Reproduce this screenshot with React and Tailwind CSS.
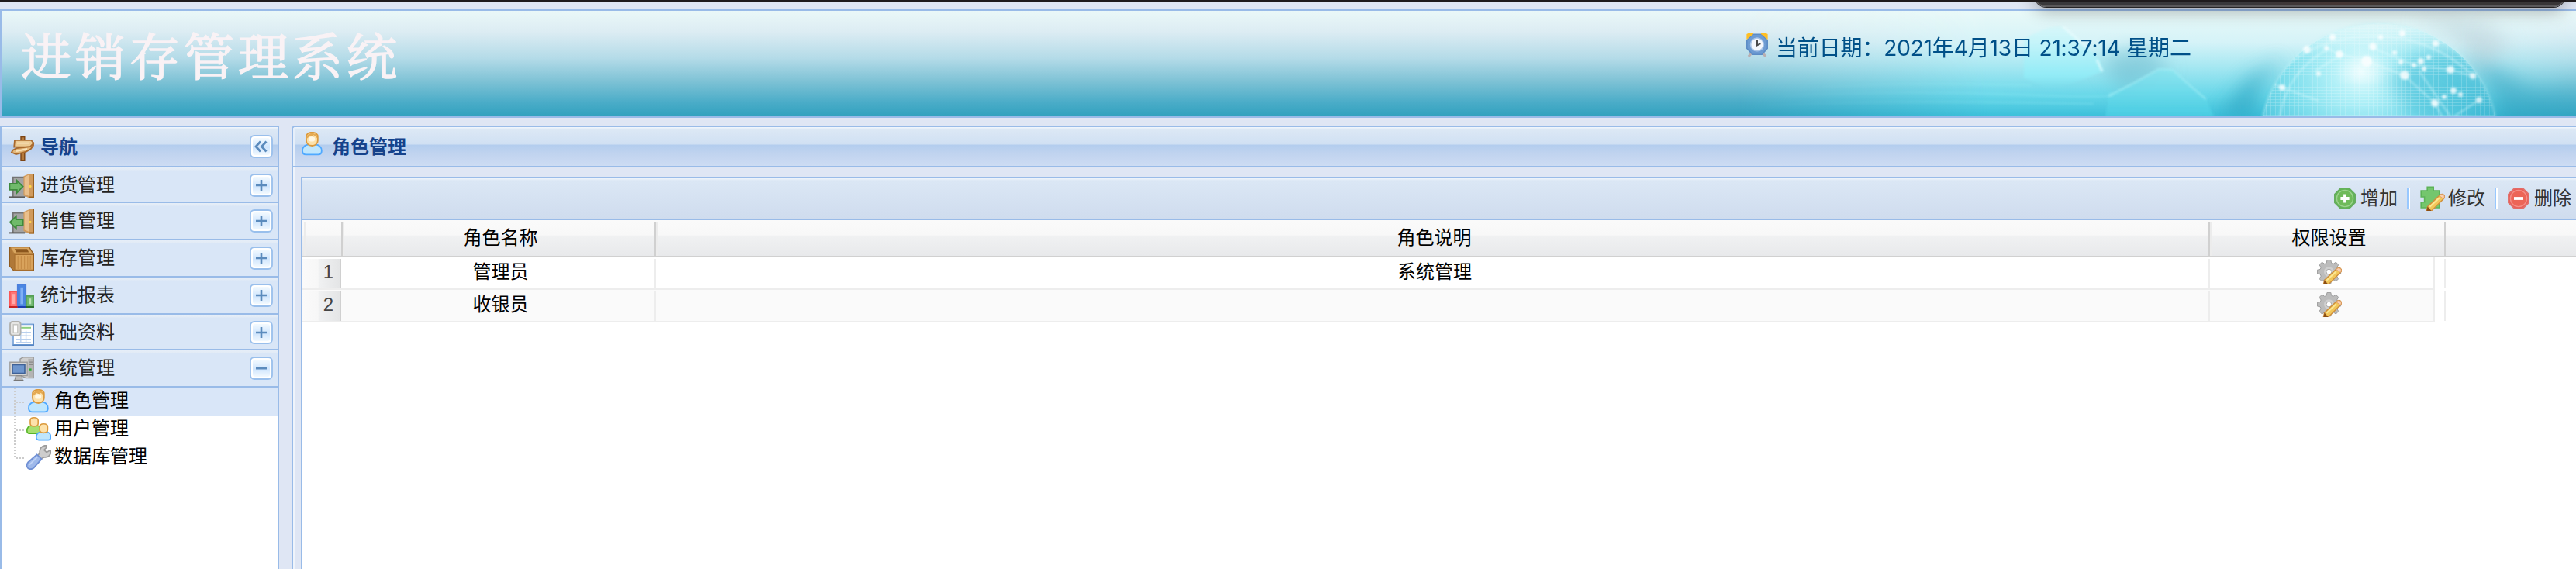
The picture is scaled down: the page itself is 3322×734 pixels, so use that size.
import React from 'react';

const px = { width: 32, height: 32, viewBox: '0 0 16 16' };

function Signpost() {
  return (
    <svg {...px} className="shrink-0">
      <rect x="7" y="0.3" width="2.4" height="15.4" fill="#b57a3c" stroke="#7c4414" strokeWidth=".7" />
      <path d="M3 2.4h10.6l1.6 2-1.6 2.4H2.6z" fill="#eccb94" stroke="#a9692c" strokeWidth=".9" />
      <path d="M13 6.6L15 4.6v1.2l-1.6 2.2-3 1.8-6.6 1.7-2.8-1.2L1.6 9l2.6-1.4z" fill="#e4b97c" stroke="#a9692c" strokeWidth=".9" />
      <path d="M4.5 4.3h8M4 9.6l7-1.6" stroke="#f8e4bd" strokeWidth=".9" />
    </svg>
  );
}

function Door({ out }) {
  return (
    <svg {...px} className="shrink-0">
      <path d="M2 2h9v13H2z" fill="#a3a3a3" />
      <path d="M2.4 15V2.3H10" fill="none" stroke="#747474" strokeWidth=".8" />
      <path d="M0 15.2h10" stroke="#5d5d5d" strokeWidth="1" />
      <path d="M9.2 1.6L13 0h3v15.8h-3.2L9.2 14z" fill="#d09a5c" />
      <path d="M9.8 2.2L12.6.8v13.6l-2.8-1.1z" fill="#e9bf8c" />
      <path d="M15.2 0H16v15.8h-3v-1h2.2z" fill="#99611f" />
      <circle cx="13.5" cy="8.2" r=".8" fill="#ffd54a" />
      {out ? (
        <path d="M.4 8.3L4.4 4.5v2h4.4v3.900H4.4v2z" fill="#6fba6a" stroke="#3e8a3d" strokeWidth=".9" />
      ) : (
        <path d="M8.8 8.3L4.900 4.500v2H.2v3.900h4.700v2z" fill="#6fba6a" stroke="#3e8a3d" strokeWidth=".9" />
      )}
    </svg>
  );
}

function Box() {
  return (
    <svg {...px} className="shrink-0">
      <path d="M.3.3h12.500L15.700 5v10.700H3L.3 12.800z" fill="#b8813f" stroke="#8f5a1e" strokeWidth=".6" />
      <path d="M1 .8h11.600l2.400 4H3.600z" fill="#d8a55f" />
      <path d="M3.400 1.600h8.200l1 2.200H4.600z" fill="#8b561d" />
      <path d="M.7 1.500l2.400 3.600v9.800L.7 12.500z" fill="#b07838" />
      <path d="M3.500 5.200h11.800v10H3.500z" fill="#d9a35c" stroke="#a56c2c" strokeWidth=".6" />
      <path d="M5.6 6v8.6M7.7 6v8.6M9.8 6v8.6M11.9 6v8.6M13.6 6v8.6" stroke="#c68c46" strokeWidth=".6" />
    </svg>
  );
}

function Chart() {
  return (
    <svg {...px} className="shrink-0">
      <path d="M.4 5h4.8v10H.4z" fill="#ff7676" stroke="#fb5656" strokeWidth=".9" />
      <path d="M5.4.6h5.2v14.4H5.400z" fill="#4a86e2" stroke="#4a7fdd" strokeWidth=".9" />
      <path d="M10.9 7.9h4.7V15h-4.7z" fill="#6fb76f" stroke="#55a055" strokeWidth=".9" />
      <path d="M2 6.600h1.600v6.500H2z" fill="#ffa9a9" />
      <path d="M7.200 2.400H9v10.800H7.200z" fill="#7fb0f4" />
      <path d="M12.5 9.600h1.600v3.600h-1.600z" fill="#b8e0b2" />
      <path d="M0 15h5.400" stroke="#c92222" /><path d="M5.400 15h5.400" stroke="#1c3fb4" /><path d="M10.800 15H16" stroke="#2c702c" />
    </svg>
  );
}

function Sheet() {
  return (
    <svg {...px} className="shrink-0">
      <path d="M2.5 2.2h13v13.2h-13z" fill="#fff" stroke="#7fa8da" strokeWidth=".9" />
      <path d="M15.6 2v13.6H2.2" fill="none" stroke="#5584c2" strokeWidth=".7" />
      <path d="M7.5 4.4H14" stroke="#8bcf7d" strokeWidth="1" />
      <path d="M4 7.3h10M4 9.6h10M4 11.8h10M4 13.8h10M7.4 6.4v8M10.8 6.4v8" stroke="#b9d0ee" strokeWidth=".7" />
      <rect x=".5" y=".5" width="6.8" height="8.8" rx="1.6" fill="#e6e6e4" stroke="#b0b0ad" strokeWidth=".9" />
      <rect x="2.6" y="2.4" width="2.8" height="5.2" fill="#fff" stroke="#c4c4bf" strokeWidth=".7" />
    </svg>
  );
}

function Computer() {
  return (
    <svg {...px} className="shrink-0">
      <path d="M7 1.6L9 .4h6.6v13.4h-5L7 12z" fill="#cfcfcf" stroke="#9a9a9a" strokeWidth=".7" />
      <path d="M12.2 1.4h3v12h-3z" fill="#b3b3b3" /><path d="M12.6 3.6h2.4M12.6 5.2h2.4" stroke="#8a8a8a" strokeWidth=".6" />
      <path d="M12.7 8.3h1.6" stroke="#2fae3a" strokeWidth="1.2" />
      <path d="M.4 3.6h11.2v8.7H.4z" fill="#d6d6d6" stroke="#9f9f9f" strokeWidth=".7" />
      <path d="M2 5.2h8v5.6H2z" fill="#6d95cd" stroke="#3f6196" strokeWidth=".8" />
      <path d="M4.2 12.4h3.8l.6 3H3.4z" fill="#bdbdbd" stroke="#848484" strokeWidth=".5" />
      <path d="M2.8 15.4h6.4" stroke="#777" strokeWidth=".9" />
    </svg>
  );
}

function Role() {
  return (
    <svg {...px} className="shrink-0">
      <path d="M1.5 12.2c0-2.6 2.2-3.9 3.7-3.9h5c1.7 0 3.7 1.5 3.7 3.9 0 1.8-.9 2.5-2.3 2.5H3.8c-1.3 0-2.3-.8-2.3-2.5z" fill="#bfe6fd" stroke="#4fa9ff" strokeWidth=".9" />
      <path d="M4 3.2C4 1.4 5.4.4 7.7.4s3.7 1 3.7 2.8v2.6c0 1.7-1.6 3.2-3.7 3.2S4 7.500 4 5.800z" fill="#fde2ab" stroke="#db9a3d" strokeWidth=".9" />
      <path d="M4.2 4.600c0-2.600 1.200-3.600 3.500-3.600s3.500 1 3.500 3.400L9.900 2.900 8.400 2l.4 1.500-2.200-1z" fill="#e5aa52" />
      <ellipse cx="7.600" cy="4.700" rx="2" ry="1.600" fill="#fff7e3" />
    </svg>
  );
}

function Users() {
  return (
    <svg {...px} className="shrink-0">
      <path d="M.4 8.800C.4 6.800 1.800 5.600 3 5.600h4.200c1.500 0 2.500 1.300 2.500 3.200 0 1.100-.6 1.800-1.600 1.800H2C1 10.600.4 9.900.4 8.800z" fill="#a6e070" stroke="#58b528" strokeWidth=".8" />
      <path d="M2.500 2.200C2.500 1 3.500.4 5 .4s2.600.7 2.600 1.900v1.800C7.600 5.300 6.500 6 5 6S2.500 5.300 2.500 4.100z" fill="#fde2ab" stroke="#db9a3d" strokeWidth=".8" />
      <path d="M6.400 13c0-2 1.400-3.200 2.600-3.200h4.200c1.500 0 2.500 1.300 2.500 3.100 0 1.200-.6 1.900-1.600 1.900H8c-1 0-1.600-.7-1.600-1.800z" fill="#bfe6fd" stroke="#4fa9ff" strokeWidth=".8" />
      <path d="M8.600 6.300c0-1.200 1-1.900 2.500-1.900s2.600.7 2.600 1.900v2c0 1.200-1.100 1.900-2.600 1.900s-2.500-.7-2.500-1.900z" fill="#fde2ab" stroke="#db9a3d" strokeWidth=".8" />
    </svg>
  );
}

function Wrench() {
  return (
    <svg {...px} className="shrink-0">
      <path d="M7.400 7.200l1.200-2.400C8.300 2.400 10 .4 12.600.3l.5 1.200-1.700 1.700 1.600 1.500 2.200-1.200.6.500c.1 2.500-1.900 4.300-4.200 3.900L9.300 9z" fill="#cdcdcd" stroke="#9b9b9b" strokeWidth=".8" />
      <path d="M6.800 6.200l3 2.900-5 5.700c-1.700 1.400-3.800.8-4.400-.8-.3-1 0-2 .8-2.900z" fill="#9fb9ea" stroke="#6f8fd4" strokeWidth=".9" />
      <path d="M7 7.800L2 12.800" stroke="#bfd2f6" strokeWidth="1" />
    </svg>
  );
}

function Pencil() {
  return (
    <g>
      <path d="M4.200 16l.6-2.800 7.700-7.200c.9-.8 2-1 2.800-.2.700.8.600 1.600-.2 2.500L7.700 15.600 7 16z" fill="#f2c75a" stroke="#cf8f3c" strokeWidth=".7" />
      <path d="M6.200 13.400l6.200-5.800" stroke="#fbe794" strokeWidth="1" />
      <path d="M12.300 6.200c.9-.9 2.100-1.200 2.900-.4.700.8.600 1.600-.1 2.500z" fill="#fbcfae" stroke="#dc9a63" strokeWidth=".4" />
      <path d="M4.200 16l.6-2.800 2.300 2.500L7 16z" fill="#8b4e14" />
    </g>
  );
}

function GearEdit() {
  return (
    <svg {...px} className="shrink-0">
      <path d="M6.500.2h2.400l.4 2 1.200.5 1.700-1.100 1.700 1.700-1.100 1.700.5 1.200 2 .4V9l-2 .4-.5 1.200 1.100 1.700-1.700 1.700-1.700-1.100-1.200.5-.4 2H6.500l-.4-2-1.200-.5-1.700 1.100-1.700-1.700 1.100-1.700L2.100 9.400.2 9V6.600l1.900-.4L2.600 5 1.500 3.300l1.700-1.700 1.700 1.100 1.200-.5z" fill="#bcbcbc" stroke="#9c9c9c" strokeWidth=".5" />
      <circle cx="7.700" cy="7.800" r="3.200" fill="#cfcfcf" />
      <circle cx="7.700" cy="7.800" r="1.700" fill="#fff" stroke="#ababab" strokeWidth=".5" />
      <Pencil />
    </svg>
  );
}

function PuzzleEdit() {
  return (
    <svg {...px} className="shrink-0">
      <path d="M.6 3h4V.6h4V3h3.800v11H.6v-3.600h2.200V7H.6z" fill="#74c66d" stroke="#5cb358" strokeWidth=".8" />
      <Pencil />
    </svg>
  );
}

function Round({ minus }) {
  return (
    <svg width="28" height="28" viewBox="0 0 14 14" className="shrink-0">
      <path d="M4.300.400h5.400l3.900 3.900v5.400l-3.900 3.900H4.300L.400 9.700V4.300z" fill={minus ? '#e9605a' : '#62b455'} stroke={minus ? '#e0736e' : '#66ad60'} strokeWidth=".8" strokeLinejoin="round" />
      <circle cx="7" cy="7" r="5.300" fill={minus ? '#ec6557' : '#6fba5a'} stroke={minus ? '#f48f87' : '#9bd28d'} strokeWidth=".7" />
      <path d={minus ? 'M4 7h6' : 'M4.200 7h5.600M7 4.200v5.600'} stroke="#fff" strokeWidth="1.900" />
    </svg>
  );
}

function Clock() {
  return (
    <svg width="28" height="32" viewBox="0 0 14 16" className="shrink-0">
      <path d="M1.500 15.500l2-2.500M12.500 15.500l-2-2.500" stroke="#b9aeb0" strokeWidth="1.600" />
      <path d="M4.200 1.100h5.600L13.600 5v5.200l-3.500 3.900H4L.4 10.200V5z" fill="#6d9bd2" stroke="#5c8cc6" strokeWidth=".8" />
      <circle cx="7" cy="7.700" r="4.200" fill="#f4f7fc" stroke="#a9c5e8" strokeWidth=".8" />
      <path d="M7 4.900v3.300l2.200-1.100" stroke="#4a4a4a" strokeWidth="1" fill="none" />
      <path d="M.2 4.500V1L2.200 0h2.300v1z" fill="#ffbe22" /><path d="M13.800 4.500V1l-2-1H9.500v1z" fill="#ffbe22" />
    </svg>
  );
}

function ToolButton({ kind }) {
  return (
    <svg width="30" height="30" viewBox="0 0 30 30" className="shrink-0">
      <defs>
        <linearGradient id={'tb' + kind} x1="0" y1="0" x2="0" y2="1">
          <stop offset="0" stopColor="#f3faff" /><stop offset=".55" stopColor="#cfe5fd" /><stop offset="1" stopColor="#f2f9ff" />
        </linearGradient>
      </defs>
      <rect x="1" y="1" width="28" height="28" rx="5" fill="#fff" stroke="#99bfec" strokeWidth="1.800" />
      <rect x="4" y="4" width="22" height="22" rx="3" fill={'url(#tb' + kind + ')'} />
      {kind === 'plus' && <path d="M8 15h14M15 8v14" stroke="#5b8bbd" strokeWidth="2.600" />}
      {kind === 'minus' && <path d="M8 15h14" stroke="#5b8bbd" strokeWidth="3" />}
      {kind === 'left' && <path d="M14 8.500L8 15l6 6.500M21.500 8.500l-6 6.500 6 6.500" stroke="#5b8bbd" strokeWidth="2.800" fill="none" />}
    </svg>
  );
}

const sections = [
  { label: '进货管理', icon: <Door />, row: 'h-[46px] pt-2' },
  { label: '销售管理', icon: <Door out />, row: 'h-[48px] pt-2' },
  { label: '库存管理', icon: <Box />, row: 'h-[48px] pt-2' },
  { label: '统计报表', icon: <Chart />, row: 'h-[48px] pt-2' },
  { label: '基础资料', icon: <Sheet />, row: 'h-[46px] pt-2' },
  { label: '系统管理', icon: <Computer />, row: 'h-[48px] pt-2', open: true },
];

const tree = [
  { label: '角色管理', icon: <Role />, active: true },
  { label: '用户管理', icon: <Users /> },
  { label: '数据库管理', icon: <Wrench />, last: true },
];

const dots = [[2943, 113, 4], [3000, 62, 3], [3017, 70, 5], [3060, 60, 5], [3088, 68, 3], [3096, 80, 3], [3113, 84, 3], [3126, 89, 3], [3122, 79, 4], [3132, 74, 3], [3160, 90, 5], [3189, 98, 4], [3164, 117, 4], [3173, 122, 3], [3197, 129, 4], [3140, 133, 5], [3152, 125, 3], [3101, 97, 6], [3070, 48, 3], [3141, 56, 4], [2975, 64, 5], [2990, 95, 3], [3008, 48, 4], [3098, 43, 4]];

function HeaderArt() {
  return (
    <svg className="absolute inset-0" width="3320" height="136" viewBox="2 14 3320 136">
      <defs>
        <linearGradient id="cy" x1="0" y1="0" x2="0" y2="1">
          <stop offset="0" stopColor="#e9f9f8" /><stop offset=".3" stopColor="#d5f3f8" /><stop offset=".52" stopColor="#a8e8f2" /><stop offset=".8" stopColor="#68d7e9" /><stop offset="1" stopColor="#3cc0da" />
        </linearGradient>
        <linearGradient id="fade" x1="0" y1="0" x2="1" y2="0">
          <stop offset="0" stopColor="#fff" stopOpacity="0" /><stop offset=".3" stopColor="#fff" /><stop offset=".86" stopColor="#fff" /><stop offset="1" stopColor="#fff" stopOpacity=".3" />
        </linearGradient>
        <mask id="m"><rect x="2240" y="14" width="1082" height="136" fill="url(#fade)" /></mask>
        <radialGradient id="globe" gradientUnits="userSpaceOnUse" cx="3045" cy="92" r="165">
          <stop offset="0" stopColor="#e6fcfd" /><stop offset=".2" stopColor="#b5f1f8" /><stop offset=".55" stopColor="#80dfed" stopOpacity=".9" /><stop offset="1" stopColor="#4cc3db" stopOpacity=".6" />
        </radialGradient>
        <linearGradient id="topw" x1="0" y1="0" x2="0" y2="1"><stop offset=".1" stopColor="#effcfc" stopOpacity=".9" /><stop offset=".45" stopColor="#effcfc" stopOpacity="0" /></linearGradient>
        <linearGradient id="leaf" x1="0" y1="0" x2="0" y2="1"><stop offset="0" stopColor="#d2f8fb" stopOpacity=".6" /><stop offset=".8" stopColor="#90edf8" stopOpacity=".8" /><stop offset="1" stopColor="#7be3f0" stopOpacity="0" /></linearGradient>
        <linearGradient id="leaf2" x1="0" y1="0" x2="0" y2="1"><stop offset="0" stopColor="#8be5f0" /><stop offset="1" stopColor="#4bcfe4" /></linearGradient>
        <pattern id="grid" width="6" height="4" patternUnits="userSpaceOnUse"><path d="M0 0h6M0 0v4" stroke="#fff" strokeWidth=".9" opacity=".4" /></pattern>
        <clipPath id="gc"><circle cx="3068" cy="184" r="154" /></clipPath>
        <filter id="b1"><feGaussianBlur stdDeviation="1.500" /></filter>
        <filter id="b8" x="-30%" y="-30%" width="160%" height="160%"><feGaussianBlur stdDeviation="12" /></filter>
      </defs>
      <g mask="url(#m)">
        <rect x="2240" y="14" width="1082" height="136" fill="url(#cy)" />
        <path d="M2712 86L2740 120 2780 100 2800 90 2770 60 2720 70z" fill="#6db9cc" opacity=".55" filter="url(#b8)" />
        <path d="M2905 155L2915 110 2945 75 2900 100 2860 150z" fill="#2c9fbd" opacity=".6" filter="url(#b8)" />
        <path d="M3230 165L3210 110 3180 70 3210 80 3270 115 3340 105V165z" fill="#2b9dbc" opacity=".55" filter="url(#b8)" />
        <path d="M3110 24L3170 50 3200 90 3240 60 3210 30z" fill="#b9ccd4" opacity=".6" filter="url(#b8)" />
        <path d="M2610 50C2640 34 2652 33 2660 34L2692 62 2708 78 2712 92 2670 108 2640 114 2610 100z" fill="url(#leaf)" filter="url(#b1)" />
        <path d="M2660 34L2690 60M2704 77L2711 92" stroke="#ecfdfe" strokeWidth="2.500" opacity=".8" filter="url(#b1)" fill="none" />
        <path d="M2715 150L2719 124 2750 108 2784 89 2802 90 2826 112 2845 128 2855 150z" fill="url(#leaf2)" opacity=".8" filter="url(#b1)" />
        <path d="M2719 124L2750 108 2784 89 2802 90 2826 112 2845 128" stroke="#a9f0f7" strokeWidth="2" fill="none" opacity=".7" filter="url(#b1)" />
        <path d="M2300 124Q2450 116 2600 122T2720 120M2280 136Q2450 128 2700 134M2350 112Q2460 106 2620 110" stroke="#9bf1fa" strokeWidth="3" opacity=".22" fill="none" filter="url(#b1)" />
        <g clipPath="url(#gc)">
          <circle cx="3068" cy="184" r="154" fill="url(#globe)" />
          <path d="M3110 150L3080 110 3100 80 3150 70 3200 100 3220 150z" fill="#3fb9d4" opacity=".5" filter="url(#b8)" />
          <rect x="2900" y="14" width="330" height="136" fill="url(#grid)" />
          <rect x="2900" y="14" width="330" height="136" fill="url(#topw)" />
          <path d="M2925 110Q2970 52 3050 47T3190 98M2940 150Q2950 90 3005 62M2985 92L3020 70 3052 79 3100 97 3140 133 3150 152M3000 62L3017 70M3060 62L3113 84 3160 90 3189 98M3120 92L3160 150M3197 129L3165 150M2925 105L2943 113 2990 130" stroke="#e9fdfe" strokeWidth="1.600" fill="none" opacity=".55" filter="url(#b1)" />
        </g>
        <circle cx="3068" cy="184" r="154" fill="none" stroke="#c8f6fa" strokeWidth="2" opacity=".45" filter="url(#b1)" />
        <g filter="url(#b1)" fill="#fff" opacity=".8">
          {dots.map(([x, y, r]) => <circle key={x + '-' + y} cx={x} cy={y} r={r} />)}
          <ellipse cx="3046" cy="92" rx="24" ry="10" opacity=".6" filter="url(#b8)" />
          <circle cx="3052" cy="79" r="7" />
        </g>
      </g>
    </svg>
  );
}

function Header() {
  return (
    <header className="relative h-[140px] shrink-0 border-2 border-r-0 border-[#99bbe8] bg-[linear-gradient(180deg,#eaf8f8_0%,#dcecf3_20%,#b4dbe8_45%,#80c3d6_66%,#4aacc8_87%,#31a1be_100%)] overflow-hidden">
      <HeaderArt />
      <div className="relative flex h-full">
        <h1 className="w-[520px] shrink-0 whitespace-nowrap pl-[25px] pt-[23px] font-['Noto_Serif_CJK_SC','Noto_Sans_CJK_SC',serif] text-[65px] leading-[64px] font-normal tracking-[5px] text-[#f9f2f5] [-webkit-text-stroke:1.5px_#f9f2f5]">进销存管理系统</h1>
        <div className="ml-[1730px] flex items-start pt-7 text-[28px] text-[#005088]">
          <Clock />
          <span className="ml-[10px] mt-[4px] whitespace-nowrap font-['Inter','Noto_Sans_CJK_SC',sans-serif] leading-8 tracking-[-0.15px]">当前日期：2021年4月13日 21:37:14 星期二</span>
        </div>
      </div>
    </header>
  );
}

function Sidebar() {
  return (
    <aside className="flex w-[360px] shrink-0 flex-col border-2 border-b-0 border-[#99bbe8] bg-white">
      <div className="flex h-[52px] shrink-0 items-start border-b-2 border-[#99bbe8] bg-[linear-gradient(180deg,#f2f7fd_0px,#dce8f5_3px,#d0e0f3_22px,#b3cdee_23px,#c0d3ef_34px,#cddcf3_50px)] pl-[11px] pt-[10px]">
        <span className="mt-[2px] flex"><Signpost /></span>
        <span className="ml-[7px] text-2xl leading-[31px] font-bold text-[#15428b]">导航</span>
        <span className="ml-auto mr-[6px] flex"><ToolButton kind="left" /></span>
      </div>
      {sections.map((s) => (
        <div key={s.label} className={'box-border flex shrink-0 items-start border-b-2 border-[#99bbe8] bg-[linear-gradient(180deg,#e6eef8_0px,#e2ebf6_3px,#d9e6f7_4px)] pl-[10px] ' + s.row}>
          {s.icon}
          <span className="ml-[8px] text-2xl leading-[29px] text-[#222]">{s.label}</span>
          <span className="ml-auto mr-[6px] flex"><ToolButton kind={s.open ? 'minus' : 'plus'} /></span>
        </div>
      ))}
      {tree.map((t) => (
        <div key={t.label} className={'flex h-9 shrink-0 items-center pl-[15px] ' + (t.active ? 'bg-[#d9e6f8]' : '')}>
          <svg width="17" height="36" viewBox="0 0 17 36" className="shrink-0">
            <path d={t.last ? 'M2 0v20' : 'M2 0v36'} stroke="#ccc" strokeWidth="2" strokeDasharray="2 2" />
            <path d="M4 19h12" stroke="#ccc" strokeWidth="2" strokeDasharray="2 2" />
          </svg>
          {t.icon}
          <span className="ml-1 h-9 text-2xl leading-[34px] text-black">{t.label}</span>
        </div>
      ))}
    </aside>
  );
}

const headCell = 'flex items-center justify-center pl-[5px] pb-[2px] text-2xl leading-9 text-black border-r-2 border-[#d0d0d0]';

function GridRow({ n, name, desc, alt }) {
  return (
    <div className="flex h-[42px]">
      <div className={'flex w-[2750px] border-b-2 border-r-2 border-[#ededed] text-2xl text-black ' + (alt ? 'bg-[#fafafa]' : 'bg-white')}>
        <div className="mt-[2px] w-[50px] shrink-0 border-r-2 border-[#d0d0d0] bg-[linear-gradient(90deg,#fafafa_0px,#f7f7f7_20px,#f0f1f2_22px,#e4e5e6_48px)] pr-[8px] text-right leading-[34px] text-[#444]">{n}</div>
        <div className="mt-[2px] w-[406px] shrink-0 border-r-2 border-[#ededed] pl-[7px] text-center leading-[33px]">{name}</div>
        <div className="mt-[2px] w-[2004px] shrink-0 border-r-2 border-[#ededed] pl-[6px] text-center leading-[33px]">{desc}</div>
        <div className="flex flex-1 justify-center pl-[20px] pt-[3px]"><GearEdit /></div>
      </div>
      <div className="mb-[2px] mt-[2px] ml-3 w-[2px] bg-[#ededed]" />
    </div>
  );
}

function Action({ icon, label }) {
  return (
    <div className="flex items-center">
      {icon}
      <span className="text-2xl leading-8 text-[#333]">{label}</span>
    </div>
  );
}

function Separator() {
  return <div className="h-[26px] w-1 shrink-0 border-l-2 border-r-2 border-l-[#98c8ff] border-r-white" />;
}

function RolePanel() {
  return (
    <main className="flex min-w-0 flex-1 flex-col rounded-tl-[5px] border-l-2 border-t-2 border-[#99bbe8] bg-[#dfe6f4]">
      <div className="flex h-[52px] shrink-0 items-start rounded-tl-[3px] border-b-2 border-[#99bbe8] bg-[linear-gradient(180deg,#f2f7fd_0px,#dce8f5_3px,#d0e0f3_22px,#b3cdee_23px,#c0d3ef_34px,#cddcf3_50px)] pl-[9px] shadow-[inset_2px_0_0_#e6effa]">
        <span className="mt-[6px] flex"><Role /></span>
        <span className="ml-[9px] mt-[10px] text-2xl leading-[31px] font-bold text-[#15428b]">角色管理</span>
      </div>
      <div className="flex min-h-0 flex-1 border-l-2 border-[#eff4fb] pl-[8px] pt-3">
        <section className="flex flex-1 flex-col border-l-2 border-t-2 border-[#99bbe8] bg-white">
          <div className="flex h-[54px] shrink-0 items-center justify-end border-b-2 border-[#99bbe8] bg-[linear-gradient(180deg,#f0f5fb_0px,#dbe7f5_3px,#cfdcee_52px)] pb-[1px] pr-[6px]">
            <Action icon={<span className="mr-[6px] flex"><Round /></span>} label="增加" />
            <span className="ml-3 mr-[13px] flex"><Separator /></span>
            <Action icon={<span className="mr-1 flex"><PuzzleEdit /></span>} label="修改" />
            <span className="ml-3 mr-[13px] flex"><Separator /></span>
            <Action icon={<span className="mr-[6px] flex"><Round minus /></span>} label="删除" />
          </div>
          <div className="flex h-12 shrink-0 border-b-2 border-[#d0d0d0] bg-[linear-gradient(180deg,#fafafa_0px,#f8f8f8_19px,#f0f1f2_21px,#e8e9eb_46px)] pt-[2px]">
            <div className="flex w-[52px] shrink-0 border-r-2 border-[#d0d0d0]"><div className="ml-[2px] w-[2px] bg-[#ececec]" /></div>
            <div className={headCell + ' w-[404px] shrink-0 shadow-[inset_2px_0_0_#ececec]'}>角色名称</div>
            <div className={headCell + ' w-[2004px] shrink-0 shadow-[inset_2px_0_0_#ececec]'}>角色说明</div>
            <div className={headCell + ' w-[304px] shrink-0 shadow-[inset_2px_0_0_#ececec]'}>权限设置</div>
          </div>
          <GridRow n="1" name="管理员" desc="系统管理" />
          <GridRow n="2" name="收银员" desc="" alt />
        </section>
      </div>
    </main>
  );
}

export default function App() {
  return (
    <div className="relative flex h-[734px] w-[3322px] flex-col overflow-hidden border-t-2 border-[#1f1b1d] bg-[#dfe6f4] pt-[10px] font-['Liberation_Sans','Noto_Sans_CJK_SC',sans-serif]">
      <Header />
      <div className="mt-[10px] flex min-h-0 flex-1 gap-4">
        <Sidebar />
        <RolePanel />
      </div>
      <div className="absolute -top-[32px] left-[2623px] h-[39px] w-[686px] rounded-b-[16px] border-b-2 border-[#5b595b] bg-[linear-gradient(90deg,#39383b_0%,#39383b_40%,#453634_58%,#3a3735_72%,#383537_100%)] shadow-[0_1px_0_#262425,0_5px_22px_rgba(0,0,0,0.3)]" />
    </div>
  );
}
